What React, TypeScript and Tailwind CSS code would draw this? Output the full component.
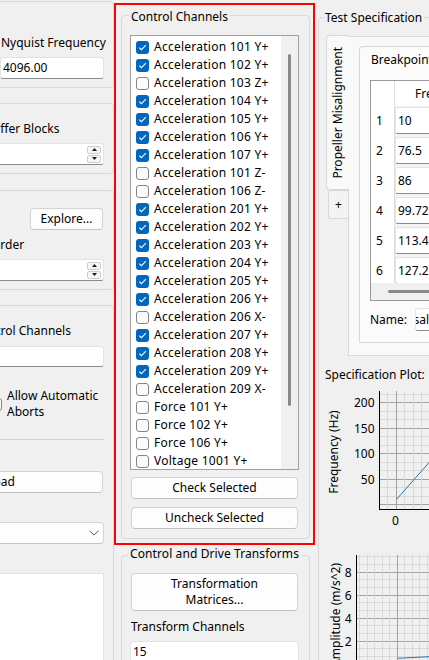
import React from "react";

type Channel = [string, boolean];

const channels: Channel[] = [
  ["Acceleration 101 Y+", true],
  ["Acceleration 102 Y+", true],
  ["Acceleration 103 Z+", false],
  ["Acceleration 104 Y+", true],
  ["Acceleration 105 Y+", true],
  ["Acceleration 106 Y+", true],
  ["Acceleration 107 Y+", true],
  ["Acceleration 101 Z-", false],
  ["Acceleration 106 Z-", false],
  ["Acceleration 201 Y+", true],
  ["Acceleration 202 Y+", true],
  ["Acceleration 203 Y+", true],
  ["Acceleration 204 Y+", true],
  ["Acceleration 205 Y+", true],
  ["Acceleration 206 Y+", true],
  ["Acceleration 206 X-", false],
  ["Acceleration 207 Y+", true],
  ["Acceleration 208 Y+", true],
  ["Acceleration 209 Y+", true],
  ["Acceleration 209 X-", false],
  ["Force 101 Y+", false],
  ["Force 102 Y+", false],
  ["Force 106 Y+", false],
  ["Voltage 1001 Y+", false],
];

const breakpoints = ["10", "76.5", "86", "99.72", "113.4", "127.2"];

function CheckBox({ checked }: { checked: boolean }) {
  if (checked) {
    return (
      <span className="w-[13px] h-[13px] shrink-0 rounded-[3px] bg-[#0067c0] flex items-center justify-center">
        <svg width="9" height="7" viewBox="0 0 9 7">
          <path d="M1.2 3.6 L3.4 5.7 L7.9 1.2" fill="none" stroke="#ffffff" strokeWidth="1.1" />
        </svg>
      </span>
    );
  }
  return <span className="w-[13px] h-[13px] shrink-0 rounded-[3px] border border-[#858585] bg-[#fbfbfb]" />;
}

function LineEdit({ className = "", children }: { className?: string; children?: React.ReactNode }) {
  return (
    <div
      className={`bg-white border border-[#e3e3e3] border-b-[#8a8a8a] rounded-[3px] flex items-center overflow-hidden whitespace-nowrap ${className}`}
    >
      {children}
    </div>
  );
}

function PushButton({ className = "", children }: { className?: string; children?: React.ReactNode }) {
  return (
    <button
      type="button"
      className={`shrink-0 bg-[#fdfdfd] border border-[#d4d4d4] border-b-[#c2c2c2] rounded-[4px] flex flex-col items-center justify-center text-center leading-[16px] whitespace-nowrap ${className}`}
    >
      {children}
    </button>
  );
}

function SpinBox({ className = "" }: { className?: string }) {
  return (
    <LineEdit className={`h-[22px] ${className}`}>
      <div className="ml-auto mr-[2px] w-[14px] h-[17px] flex flex-col gap-[1px]">
        <div className="flex-1 bg-[#f6f6f6] border border-[#cccccc] rounded-[2px] flex items-center justify-center">
          <svg width="5" height="3" viewBox="0 0 5 3">
            <path d="M0 3 L2.5 0 L5 3 Z" fill="#1a1a1a" />
          </svg>
        </div>
        <div className="flex-1 bg-[#f6f6f6] border border-[#cccccc] rounded-[2px] flex items-center justify-center">
          <svg width="5" height="3" viewBox="0 0 5 3">
            <path d="M0 0 L2.5 3 L5 0 Z" fill="#1a1a1a" />
          </svg>
        </div>
      </div>
    </LineEdit>
  );
}

function ComboBox({ className = "" }: { className?: string }) {
  return (
    <div className={`bg-[#fdfdfd] border border-[#d4d4d4] border-b-[#c2c2c2] rounded-[4px] flex items-center ${className}`}>
      <svg className="ml-auto mr-[4px]" width="10" height="6" viewBox="0 0 10 6">
        <path d="M0.5 0.8 L5 5 L9.5 0.8" fill="none" stroke="#5a5a5a" strokeWidth="1" />
      </svg>
    </div>
  );
}

function LeftColumn() {
  const group = "shrink-0 border border-[#d8d8d8] rounded-[4px] pl-[39px] pr-[9px] pt-[17px] flex flex-col";
  return (
    <div className="w-[114px] shrink-0 overflow-hidden">
      <div className="-ml-[40px] w-[154px] flex flex-col">
        <div className={`mt-[1px] h-[87px] ${group} !pt-[33px]`}>
          <div className="pl-[1px] whitespace-nowrap">Nyquist Frequency</div>
          <LineEdit className="mt-[6px] h-[22px] pl-[2px]">4096.00</LineEdit>
        </div>

        <div className={`mt-[15px] h-[71px] ${group}`}>
          <div className="-ml-[15px] whitespace-nowrap">Buffer Blocks</div>
          <SpinBox className="mt-[6px] -ml-[60px]" />
        </div>

        <div className={`mt-[16px] h-[100px] ${group}`}>
          <div className="flex justify-end pr-[1px]">
            <PushButton className="w-[73px] h-[22px]">Explore...</PushButton>
          </div>
          <div className="mt-[7px] -ml-[9px] whitespace-nowrap">Order</div>
          <SpinBox className="mt-[6px] -ml-[60px]" />
        </div>

        <div className={`mt-[15px] h-[420px] ${group}`}>
          <div className="-ml-[26px] whitespace-nowrap">Control Channels</div>
          <LineEdit className="mt-[7px] h-[21px] -ml-[60px]" />
          <div className="mt-[21px] -ml-[11px] flex items-center gap-[5px]">
            <CheckBox checked={false} />
            <div className="whitespace-nowrap">
              Allow Automatic
              <br />
              Aborts
            </div>
          </div>
          <div className="mt-[19px] -ml-[40px] h-px bg-[#d0d0d0]" />
          <PushButton className="mt-[31px] -ml-[101px] w-[204px] h-[22px]">Load</PushButton>
          <ComboBox className="mt-[29px] -ml-[60px] h-[22px]" />
          <div className="mt-[29px] -ml-[60px] h-[140px] bg-white border border-[#e3e3e3]" />
        </div>
      </div>
    </div>
  );
}

function ChannelList() {
  return (
    <div className="shrink-0 w-[169px] h-[435px] border border-[#a0a0a0] bg-white flex overflow-hidden">
      <div className="w-[150px] shrink-0 pt-[2px]">
        {channels.map(([name, on]) => (
          <div key={name} className="h-[18px] pl-[5px] flex items-center gap-[5px] whitespace-nowrap tracking-[0.25px]">
            <CheckBox checked={on} />
            <span>{name}</span>
          </div>
        ))}
      </div>
      <div className="flex-1 bg-[#f0f0f0]">
        <div className="ml-[7px] mt-[18px] w-[3px] h-[352px] rounded-full bg-[#8a8a8a]" />
      </div>
    </div>
  );
}

function MiddleColumn() {
  return (
    <div className="w-[204px] shrink-0 flex flex-col">
      <div className="shrink-0 mt-[3px] w-[201px] h-[542px] border-2 border-[#ff0000] pl-[5px] pt-[10px]">
        <div className="relative w-[189px] h-[524px] border border-[#d8d8d8] rounded-[4px] pl-[8px] pt-[19px] flex flex-col">
          <span className="absolute left-[7px] -top-[7px] px-[2px] bg-[#f0f0f0] whitespace-nowrap">Control Channels</span>
          <ChannelList />
          <PushButton className="mt-[7px] ml-[1px] w-[167px] h-[22px]">Check Selected</PushButton>
          <PushButton className="mt-[8px] ml-[1px] w-[167px] h-[22px]">Uncheck Selected</PushButton>
        </div>
      </div>

      <div className="shrink-0 relative mt-[10px] ml-[7px] w-[189px] h-[200px] border border-[#d8d8d8] rounded-[4px] pl-[9px] pt-[17px] flex flex-col">
        <span className="absolute left-[6px] -top-[10px] px-[2px] bg-[#f0f0f0] whitespace-nowrap tracking-[0.1px]">
          Control and Drive Transforms
        </span>
        <PushButton className="w-[167px] h-[38px]">
          <span>Transformation</span>
          <span>Matrices...</span>
        </PushButton>
        <div className="mt-[8px] whitespace-nowrap">Transform Channels</div>
        <LineEdit className="shrink-0 mt-[6px] -ml-[1px] w-[169px] h-[22px] pl-[2px]">15</LineEdit>
      </div>
    </div>
  );
}

function BreakpointTable() {
  return (
    <div className="shrink-0 w-[300px] h-[221px] border border-[#999999] flex flex-col">
      <div className="h-[202px] shrink-0 overflow-hidden flex flex-col">
        <div className="h-[25px] shrink-0 flex">
          <div className="w-[24px] shrink-0 bg-white border-r border-[#dedede]" />
          <div className="flex-1 bg-white pl-[20px] flex items-center whitespace-nowrap">Frequency (Hz)</div>
        </div>
        {breakpoints.map((v, i) => (
          <div key={v} className="h-[30px] shrink-0 flex">
            <div className="w-[24px] shrink-0 bg-white border-r border-[#dedede] pl-[5px] flex items-center">{i + 1}</div>
            <div className="flex-1 bg-[#f3f3f3] pt-px">
              <LineEdit className="h-[27px] pl-[2px]">{v}</LineEdit>
            </div>
          </div>
        ))}
      </div>
      <div className="h-[17px] shrink-0 bg-[#f0f0f0] pl-[17px] pt-[7px]">
        <div className="w-[300px] h-[3px] rounded-full bg-[#8a8a8a]" />
      </div>
    </div>
  );
}

const snap = (v: number) => Math.floor(v) + 0.5;

function FrequencyPlot() {
  const rows = Array.from({ length: 14 }, (_, k) => ({ y: snap(504.5 - 8.5 * k), major: k % 3 === 0 }));
  const cols = Array.from({ length: 6 }, (_, i) => i - 1).map((k) => ({ x: snap(396 + 8.5 * k), major: k === 0 }));
  const ticks: [string, number][] = [
    ["200", 402],
    ["150", 428],
    ["100", 453.5],
    ["50", 479],
  ];
  return (
    <svg className="block" width="300" height="152" viewBox="319 383 300 152" fontFamily="'Noto Sans', sans-serif" fontSize="12">
      {rows.map((r) => (
        <line key={`h${r.y}`} x1="380" x2="620" y1={r.y} y2={r.y} stroke={r.major ? "#a2a2a2" : "#d9d9d9"} strokeWidth="1" />
      ))}
      {cols.map((c) => (
        <line key={`v${c.x}`} x1={c.x} x2={c.x} y1="391" y2="509" stroke={c.major ? "#a2a2a2" : "#d9d9d9"} strokeWidth="1" />
      ))}
      <line x1="379.5" x2="379.5" y1="391" y2="510" stroke="#000" strokeWidth="1" />
      <line x1="379" x2="620" y1="509.5" y2="509.5" stroke="#000" strokeWidth="1" />
      <polyline points="396.5,499.4 445,444.5" fill="none" stroke="#1f77b4" strokeWidth="1" />
      {ticks.map(([t, y]) => (
        <text key={t} x="374.5" y={y} textAnchor="end" dominantBaseline="central" fill="#000">
          {t}
        </text>
      ))}
      <text x="395.5" y="520" textAnchor="middle" dominantBaseline="central" fill="#000">
        0
      </text>
      <text x="333" y="452" transform="rotate(-90 333 452)" textAnchor="middle" dominantBaseline="central" fill="#000">
        Frequency (Hz)
      </text>
    </svg>
  );
}

function AmplitudePlot() {
  const rows = Array.from({ length: 15 }, (_, i) => i - 2).map((k) => ({ y: snap(572 + (23 / 3) * k), major: k % 3 === 0 }));
  const cols = Array.from({ length: 10 }, (_, i) => i - 5).map((k) => ({ x: snap(397 + 7.5 * k), major: k === 0 }));
  const ticks: [string, number][] = [
    ["8", 572],
    ["6", 595],
    ["4", 618],
    ["2", 641],
  ];
  return (
    <svg className="block" width="300" height="170" viewBox="319 535 300 170" fontFamily="'Noto Sans', sans-serif" fontSize="12">
      {rows
        .filter((r) => r.y > 555)
        .map((r) => (
          <line key={`h${r.y}`} x1="357" x2="620" y1={r.y} y2={r.y} stroke={r.major ? "#a2a2a2" : "#d9d9d9"} strokeWidth="1" />
        ))}
      {cols.map((c) => (
        <line key={`v${c.x}`} x1={c.x} x2={c.x} y1="555" y2="705" stroke={c.major ? "#a2a2a2" : "#d9d9d9"} strokeWidth="1" />
      ))}
      <line x1="356.5" x2="356.5" y1="555" y2="705" stroke="#000" strokeWidth="1" />
      <polyline points="397.5,658.3 445,655.9" fill="none" stroke="#1f77b4" strokeWidth="1" />
      {ticks.map(([t, y]) => (
        <text key={t} x="351.5" y={y} textAnchor="end" dominantBaseline="central" fill="#000">
          {t}
        </text>
      ))}
      <text x="335" y="563" transform="rotate(-90 335 563)" textAnchor="end" dominantBaseline="central" fill="#000">
        Amplitude (m/s^2)
      </text>
    </svg>
  );
}

function RightColumn() {
  return (
    <div className="flex-1 min-w-0 overflow-hidden">
      <div className="relative mt-[17px] w-[400px] h-[700px] border border-[#d8d8d8] rounded-[4px]">
        <span className="absolute left-[4px] -top-[8px] px-[2px] bg-[#f0f0f0] whitespace-nowrap">Test Specification</span>

        <div className="flex pl-[7px] pt-[17px]">
          <div className="w-[22px] shrink-0 flex flex-col">
            <div className="relative z-10 w-[23px] h-[155px] shrink-0 border border-r-0 border-[#d8d8d8] rounded-l-[4px] bg-[#f9f9f9] flex items-center justify-center">
              <span className="[writing-mode:vertical-rl] rotate-180 whitespace-nowrap">Propeller Misalignment</span>
            </div>
            <div className="ml-[2px] w-[20px] h-[29px] shrink-0 border border-r-0 border-[#d8d8d8] rounded-l-[3px] bg-[#f3f3f3] flex items-center justify-center">
              +
            </div>
          </div>

          <div className="mt-[1px] w-[300px] h-[320px] shrink-0 border border-[#d8d8d8] bg-[#f9f9f9] pl-[10px] pt-[9px] flex flex-col">
            <div className="relative z-10 -mb-px w-[92px] h-[27px] shrink-0 border border-b-0 border-[#d8d8d8] rounded-t-[4px] bg-[#fbfbfb] pl-[11px] flex items-center whitespace-nowrap">
              Breakpoints
            </div>
            <div className="w-[300px] h-[271px] shrink-0 border border-[#d8d8d8] bg-[#fbfbfb] pl-[10px] pt-[7px] flex flex-col">
              <BreakpointTable />
              <div className="mt-[7px] flex items-center">
                <span className="w-[45px] shrink-0">Name:</span>
                <LineEdit className="w-[200px] h-[23px]">
                  <span className="-ml-[71px]">Propeller Misalignment</span>
                </LineEdit>
              </div>
            </div>
          </div>
        </div>

        <div className="mt-[11px] ml-[6px] whitespace-nowrap">Specification Plot:</div>
        <FrequencyPlot />
        <AmplitudePlot />
      </div>
    </div>
  );
}

export default function App() {
  return (
    <div className="w-[429px] h-[660px] overflow-hidden bg-[#f0f0f0] text-[12px] leading-[16px] text-black font-['Noto_Sans',sans-serif] flex">
      <LeftColumn />
      <MiddleColumn />
      <RightColumn />
    </div>
  );
}
